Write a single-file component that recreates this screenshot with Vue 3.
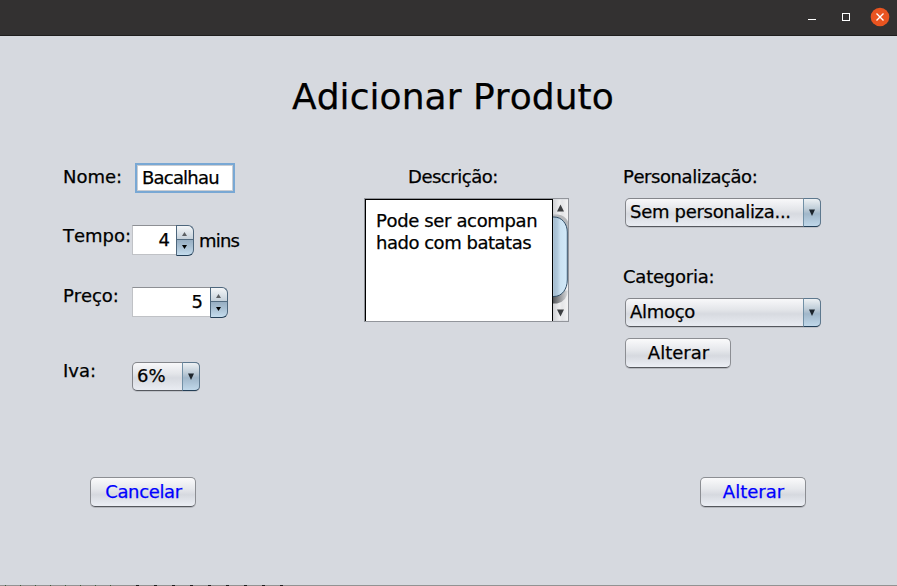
<script setup>
import { ref } from 'vue'

const nome = ref('Bacalhau')
const descricao = [
  { text: 'Pode ser acompan', tone: 'first' },
  { text: 'hado com batatas', tone: 'second' }
]
const spinners = [
  { label: 'Tempo:', value: 4, unit: 'mins', kind: 'tempo' },
  { label: 'Preço:', value: 5, unit: '', kind: 'preco' }
]
</script>

<template>
  <div class="window">
    <header class="titlebar">
      <svg class="controls" width="90" height="35" viewBox="0 0 90 35">
        <path d="M1 19.5h8" stroke="#fff" />
        <rect x="35.5" y="13.5" width="7" height="7" fill="none" stroke="#fff" />
        <circle cx="73" cy="17" r="9.3" fill="#e95420" />
        <path d="M69.5 13.5l7 7M76.5 13.5l-7 7" stroke="#fff" stroke-width="1.4" />
      </svg>
    </header>

    <main class="content">
      <h1>Adicionar Produto</h1>

      <div class="columns">
        <section class="col left">
          <div class="row nome">
            <label>Nome:</label>
            <div class="field"><span>{{ nome }}</span></div>
          </div>
          <div v-for="s in spinners" :key="s.kind" class="row" :class="s.kind">
            <label>{{ s.label }}</label>
            <div class="spinner">
              <span class="number">{{ s.value }}</span>
              <span class="steps">
                <svg width="18" height="30" viewBox="0 0 18 30">
                  <path d="M6 11h5l-2.500-4z" fill="#5c6064" />
                  <path d="M0 14.5h18" stroke="#526b80" />
                  <path d="M6 20h5l-2.500 4z" fill="#000" />
                </svg>
              </span>
            </div>
            <span v-if="s.unit" class="unit">{{ s.unit }}</span>
          </div>
          <div class="row iva">
            <label>Iva:</label>
            <div class="combo">
              <span class="choice">6%</span>
              <span class="drop"><svg width="8" height="8" viewBox="0 0 8 8"><path d="M1 .5h6L4 7z" fill="#1d252c" /></svg></span>
            </div>
          </div>
        </section>

        <section class="col middle">
          <label>Descrição:</label>
          <div class="scrollpane">
            <div class="textarea">
              <div v-for="line in descricao" :key="line.text" :class="line.tone">{{ line.text }}</div>
            </div>
            <svg class="scrollbar" width="15" height="121" viewBox="0 0 15 121">
              <defs>
                <linearGradient id="track"><stop offset="0" stop-color="#d0d1d4" /><stop offset=".45" stop-color="#f0f0f1" /><stop offset=".6" stop-color="#e4e5e7" /><stop offset="1" stop-color="#f3f3f4" /></linearGradient>
                <linearGradient id="thumb"><stop offset="0" stop-color="#dbe6ef" /><stop offset=".12" stop-color="#a5bdd0" /><stop offset=".35" stop-color="#b1c9dc" /><stop offset=".55" stop-color="#cbe2f2" /><stop offset="1" stop-color="#d2eafa" /></linearGradient>
                <linearGradient id="shade"><stop offset="0" stop-color="#55575a" /><stop offset=".5" stop-color="#999b9e" /><stop offset="1" stop-color="#dedfe1" /></linearGradient>
              </defs>
              <rect width="15" height="121" fill="url(#track)" />
              <path d="M0 15h5q7 1 10 7v9H0z" fill="#b6b8bb" />
              <path d="M0 91h15q-1 11-11 13H0z" fill="url(#shade)" />
              <path d="M-1 17.5h2c8 0 13.3 7 13.3 15v48c0 9-5.3 16.500-13.3 16.500h-2z" fill="url(#thumb)" stroke="#304d66" />
              <path d="M4 12h7L7.500 5z" fill="#3d3f41" />
              <path d="M4 110h7l-3.500 7z" fill="#3d3f41" />
            </svg>
          </div>
        </section>

        <section class="col right">
          <label class="personalizacao">Personalização:</label>
          <div class="combo">
            <span class="choice">Sem personaliza...</span>
            <span class="drop"><svg width="8" height="8" viewBox="0 0 8 8"><path d="M1 .5h6L4 7z" fill="#1d252c" /></svg></span>
          </div>
          <label class="categoria">Categoria:</label>
          <div class="combo">
            <span class="choice">Almoço</span>
            <span class="drop"><svg width="8" height="8" viewBox="0 0 8 8"><path d="M1 .5h6L4 7z" fill="#1d252c" /></svg></span>
          </div>
          <button class="btn change">Alterar</button>
        </section>
      </div>

      <footer class="actions">
        <button class="btn primary cancel">Cancelar</button>
        <button class="btn primary">Alterar</button>
      </footer>
    </main>
    <div class="edge"></div>
  </div>
</template>

<style>
body { margin: 0; background: #d6d9df; }
</style>

<style scoped>
* { box-sizing: border-box; }
.window {
  width: 897px;
  height: 586px;
  display: flex;
  flex-direction: column;
  overflow: hidden;
  background: #d6d9df;
  color: #000;
  font: 18px/22px "DejaVu Sans", sans-serif;
  font-kerning: none;
  -webkit-text-stroke: 0.25px currentColor;
  white-space: nowrap;
}
.titlebar {
  height: 36px;
  flex: none;
  display: flex;
  justify-content: flex-end;
  background: #333131;
  border-bottom: 1px solid #1f1e1e;
}
.controls { display: block; }
.content { flex: 1; display: flex; flex-direction: column; }
h1 {
  margin: 40px 0 0;
  padding-left: 292px;
  font-size: 36px;
  line-height: 42px;
  font-weight: 400;
  letter-spacing: 0.06px;
}
.columns {
  display: grid;
  grid-template-columns: 301px 259px 198px;
  padding: 45px 0 0 63px;
  height: 359px;
}
.col { display: flex; flex-direction: column; align-items: flex-start; }
label { display: block; }
.row { display: flex; align-items: flex-start; }
.row label { width: 69px; flex: none; }
.nome { height: 62px; }
.nome label { padding-top: 3px; width: 72px; }
.tempo { height: 62px; }
.preco { height: 75px; }
.preco label { margin-top: -2px; letter-spacing: -0.1px; }
.iva label { margin-top: -2px; }
.field {
  width: 100px;
  height: 30px;
  border: 2px solid #79a8d4;
  background: #fff;
  box-shadow: inset 0 0 0 1px #c9cdd3;
  padding: 2px 0 0 5px;
  letter-spacing: -0.8px;
}
.spinner { display: flex; width: 62px; height: 31px; }
.preco .spinner { width: 96px; }
.number {
  flex: 1;
  height: 30px;
  background: #fff;
  border: 1px solid #c0c2c6;
  border-top-color: #8d8f94;
  border-right: 0;
  text-align: right;
  padding: 3px 6px 0 0;
}
.preco .number { padding-right: 7px; }
.steps {
  width: 18px;
  height: 31px;
  border: 1px solid #4d667c;
  border-bottom-color: #243f57;
  border-radius: 0 6px 6px 0;
  background: linear-gradient(#f4f6f8, #c4d0da 46%, #97aec2 48%, #a8bfd2 70%, #c4dced);
  overflow: hidden;
}
.steps svg { display: block; margin-left: -1px; margin-top: -1px; }
.unit { padding: 5px 0 0 5px; letter-spacing: -0.8px; }
.combo {
  width: 196px;
  height: 29px;
  display: flex;
  border: 1px solid #84868b;
  border-bottom-color: #55585e;
  border-radius: 5px;
  background: linear-gradient(#f8f8fa, #e3e5e9 40%, #d7dae0 55%, #e9ecf2);
  box-shadow: 0 1px 0 #bfc2c8;
}
.iva .combo { width: 68px; }
.choice { flex: 1; padding: 2px 0 0 4px; letter-spacing: -0.3px; }
.iva .choice { letter-spacing: 0; }
.drop {
  width: 18px;
  height: 29px;
  margin: -1px -1px 0 0;
  display: flex;
  align-items: center;
  justify-content: center;
  border: 1px solid #5d788e;
  border-left-color: #7190a6;
  border-bottom-color: #243f57;
  border-radius: 0 5px 5px 0;
  background: linear-gradient(#edf1f4, #bac9d5 40%, #a1b7ca 55%, #c0d8ea);
}
.middle label { margin: 3px 0 0 44px; letter-spacing: -0.48px; }
.scrollpane {
  display: flex;
  width: 205px;
  height: 124px;
  margin-top: 10px;
  border: 1px solid #92959b;
}
.textarea {
  width: 188px;
  border: solid #000;
  border-width: 1px 1px 0 1px;
  background: #fff;
  padding: 10px 0 0 10px;
}
.first { letter-spacing: -0.36px; }
.second { letter-spacing: -0.48px; }
.scrollbar { display: block; width: 15px; height: 122px; }
.right label { margin-top: 3px; }
.right .personalizacao { letter-spacing: -0.42px; }
.right .combo { margin: 10px 0 0 2px; }
.right .categoria { margin-top: 39px; letter-spacing: -0.22px; }
.btn {
  width: 106px;
  height: 30px;
  padding: 0 0 1px 1px;
  border: 1px solid #8c8e93;
  border-bottom-color: #55585d;
  border-radius: 5px;
  background: linear-gradient(#fafafb, #e5e7eb 40%, #d6d9df 60%, #eceff5);
  box-shadow: 0 1px 0 #b5b8be;
  color: #000;
  font: inherit;
  font-kerning: none;
}
.change { margin: 11px 0 0 2px; }
.primary { color: #00f; }
.cancel { letter-spacing: -0.35px; }
.actions { display: flex; justify-content: space-between; padding: 0 91px 0 90px; }
.edge {
  height: 1px;
  flex: none;
  background:
    repeating-linear-gradient(90deg, transparent 0 5px, #3c5938 5px 6px, transparent 6px 15px) 0 0 / 120px 1px no-repeat,
    repeating-linear-gradient(90deg, transparent 0 6px, #1c1c1c 6px 9px, transparent 9px 18px) 130px 0 / 165px 1px no-repeat,
    #929292;
}
</style>
